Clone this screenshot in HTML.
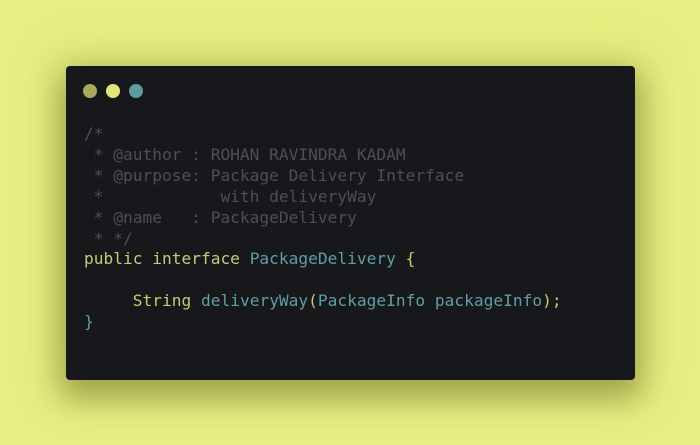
<!DOCTYPE html>
<html><head><style>
html,body{margin:0;padding:0;width:700px;height:445px;overflow:hidden;background:#e8ef82;}
.card{position:absolute;left:66px;top:66px;width:569px;height:314px;background:#16181b;border-radius:4px;
box-shadow:0 14px 30px 6px rgba(120,120,40,0.55),0 0 40px 10px rgba(170,175,80,0.35);}
.dot{position:absolute;top:84px;width:14px;height:14px;border-radius:50%;}
pre{position:absolute;left:84px;top:124px;margin:0;font-family:"DejaVu Sans Mono","Liberation Mono",monospace;font-size:16.2px;line-height:20.9px;color:#4d5052;}
.k{color:#c8c976}.t{color:#5f9fa3}
</style></head><body>
<div class="card"></div>
<div class="dot" style="left:83px;background:#a9aa5c"></div>
<div class="dot" style="left:106px;background:#e2e57a"></div>
<div class="dot" style="left:129px;background:#5c9a9c"></div>
<pre>/*
 * @author : ROHAN RAVINDRA KADAM
 * @purpose: Package Delivery Interface
 *            with deliveryWay
 * @name   : PackageDelivery
 * */
<span class="k">public interface</span> <span class="t">PackageDelivery</span> <span class="k">{</span>

     <span class="k">String</span> <span class="t">deliveryWay</span><span class="k">(</span><span class="t">PackageInfo packageInfo</span><span class="k">);</span>
<span class="t">}</span></pre>
</body></html>
